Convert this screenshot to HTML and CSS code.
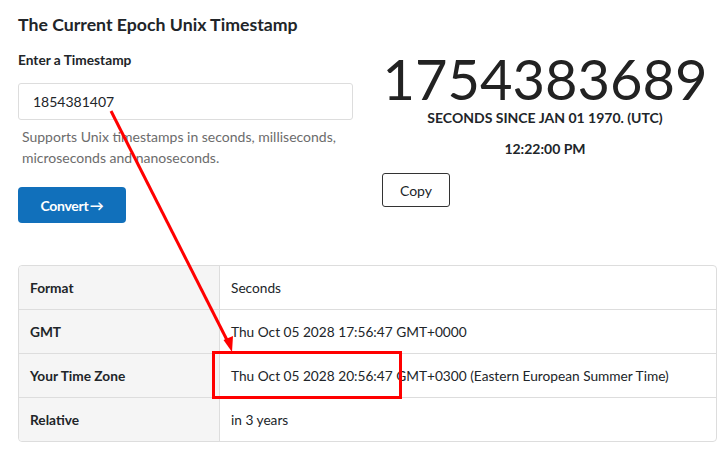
FILE: index.html
```html
<!DOCTYPE html>
<html lang="en">
    <head>
        <meta charset="UTF-8" />
        <meta name="viewport" content="width=device-width, initial-scale=1.0" />
        <title>Epoch Converter</title>
        <link rel="stylesheet" href="styles.css">
    </head>

    <body>
        <div class="page">
            <h1 class="page-title">The Current Epoch Unix Timestamp</h1>
            <div class="top">
                <div class="converter">
                    <label class="field-label" for="ts">Enter a Timestamp</label>
                    <input class="ts-input" id="ts" type="text" value="1854381407" />
                    <p class="hint">Supports Unix timestamps in seconds, milliseconds, microseconds and nanoseconds.</p>
                    <button class="btn-convert">Convert&thinsp;&rarr;</button>
                </div>
                <div class="now">
                    <div class="now-value">1754383689</div>
                    <div class="now-caption">SECONDS SINCE JAN 01 1970. (UTC)</div>
                    <div class="now-time">12:22:00 PM</div>
                    <button class="btn-copy">Copy</button>
                </div>
            </div>

            <table class="result">
                <tr>
                    <th>Format</th>
                    <td>Seconds</td>
                </tr>
                <tr>
                    <th>GMT</th>
                    <td>Thu Oct 05 2028 17:56:47 GMT+0000</td>
                </tr>
                <tr>
                    <th>Your Time Zone</th>
                    <td>Thu Oct 05 2028 20:56:47 GMT+0300 (Eastern European Summer Time)</td>
                </tr>
                <tr>
                    <th>Relative</th>
                    <td>in 3 years</td>
                </tr>
            </table>
        </div>

        <!-- red markup drawn over the screenshot -->
        <svg class="markup" width="723" height="460" viewBox="0 0 723 460">
            <line x1="111" y1="111" x2="228" y2="342" stroke="#f00" stroke-width="3" />
            <polygon points="232,352 223.5,340 233,336" fill="#f00" />
            <rect x="213.5" y="352.5" width="187" height="45" fill="none" stroke="#f00" stroke-width="3" />
        </svg>
    </body>
</html>
```

FILE: styles.css
```css
* {
    padding: 0;
    margin: 0;
    box-sizing: border-box;
}

body {
    font-family: Lato, "Open Sans", "Liberation Sans", sans-serif;
    color: #212529;
    background-color: #fff;
}

.page {
    padding: 13px 6px 0 18px;
}

.page-title {
    font-size: 17.7px;
    font-weight: 700;
    line-height: 24px;
}

.top {
    display: flex;
    margin-top: 13px;
}

.converter {
    width: 335px;
}

.field-label {
    display: block;
    margin-top: 2px;
    font-size: 13.7px;
    font-weight: 700;
    line-height: 16px;
}

.ts-input {
    display: block;
    width: 100%;
    height: 37px;
    margin-top: 15px;
    padding: 0 14px;
    border: 1px solid #ddd;
    border-radius: 3px;
    font-family: inherit;
    font-size: 14px;
    color: #212529;
}

.hint {
    margin-top: 6px;
    padding-left: 4px;
    font-size: 14px;
    line-height: 21px;
    color: #6c6c6c;
}

.btn-convert {
    margin-top: 19px;
    width: 108px;
    height: 36px;
    border: none;
    border-radius: 4px;
    background-color: #1170bb;
    color: #fff;
    font-family: inherit;
    font-size: 14px;
    font-weight: 700;
    letter-spacing: -0.3px;
}

.now {
    width: 326px;
    margin-left: 29px;
    margin-top: 3px;
    text-align: center;
}

.now-value {
    font-size: 56px;
    line-height: 52px;
    font-weight: 400;
    color: #222;
}

.now-caption,
.now-time {
    font-size: 14px;
    font-weight: 700;
    line-height: 16px;
}

.now-caption {
    margin-top: 5px;
}

.now-time {
    margin-top: 15px;
}

.btn-copy {
    display: block;
    margin-top: 16px;
    width: 68px;
    height: 34px;
    border: 1px solid #333;
    border-radius: 3px;
    background-color: #fff;
    color: #212529;
    font-family: inherit;
    font-size: 14px;
}

.result {
    width: 699px;
    margin-top: 42px;
    border-collapse: separate;
    border-spacing: 0;
    border: 1px solid #ddd;
    border-radius: 4px;
    font-size: 13.7px;
}

.result th,
.result td {
    height: 44px;
    padding: 0 11px;
    text-align: left;
    border-top: 1px solid #ddd;
}

.result tr:first-child th,
.result tr:first-child td {
    height: 43px;
    border-top: none;
}

.result th {
    width: 201px;
    background-color: #f5f5f5;
    border-right: 1px solid #ddd;
    font-weight: 700;
}

.result td {
    font-weight: 400;
}

.result tr:first-child th {
    border-top-left-radius: 4px;
}

.result tr:last-child th {
    border-bottom-left-radius: 4px;
}

.markup {
    position: absolute;
    left: 0;
    top: 0;
    pointer-events: none;
}
```
